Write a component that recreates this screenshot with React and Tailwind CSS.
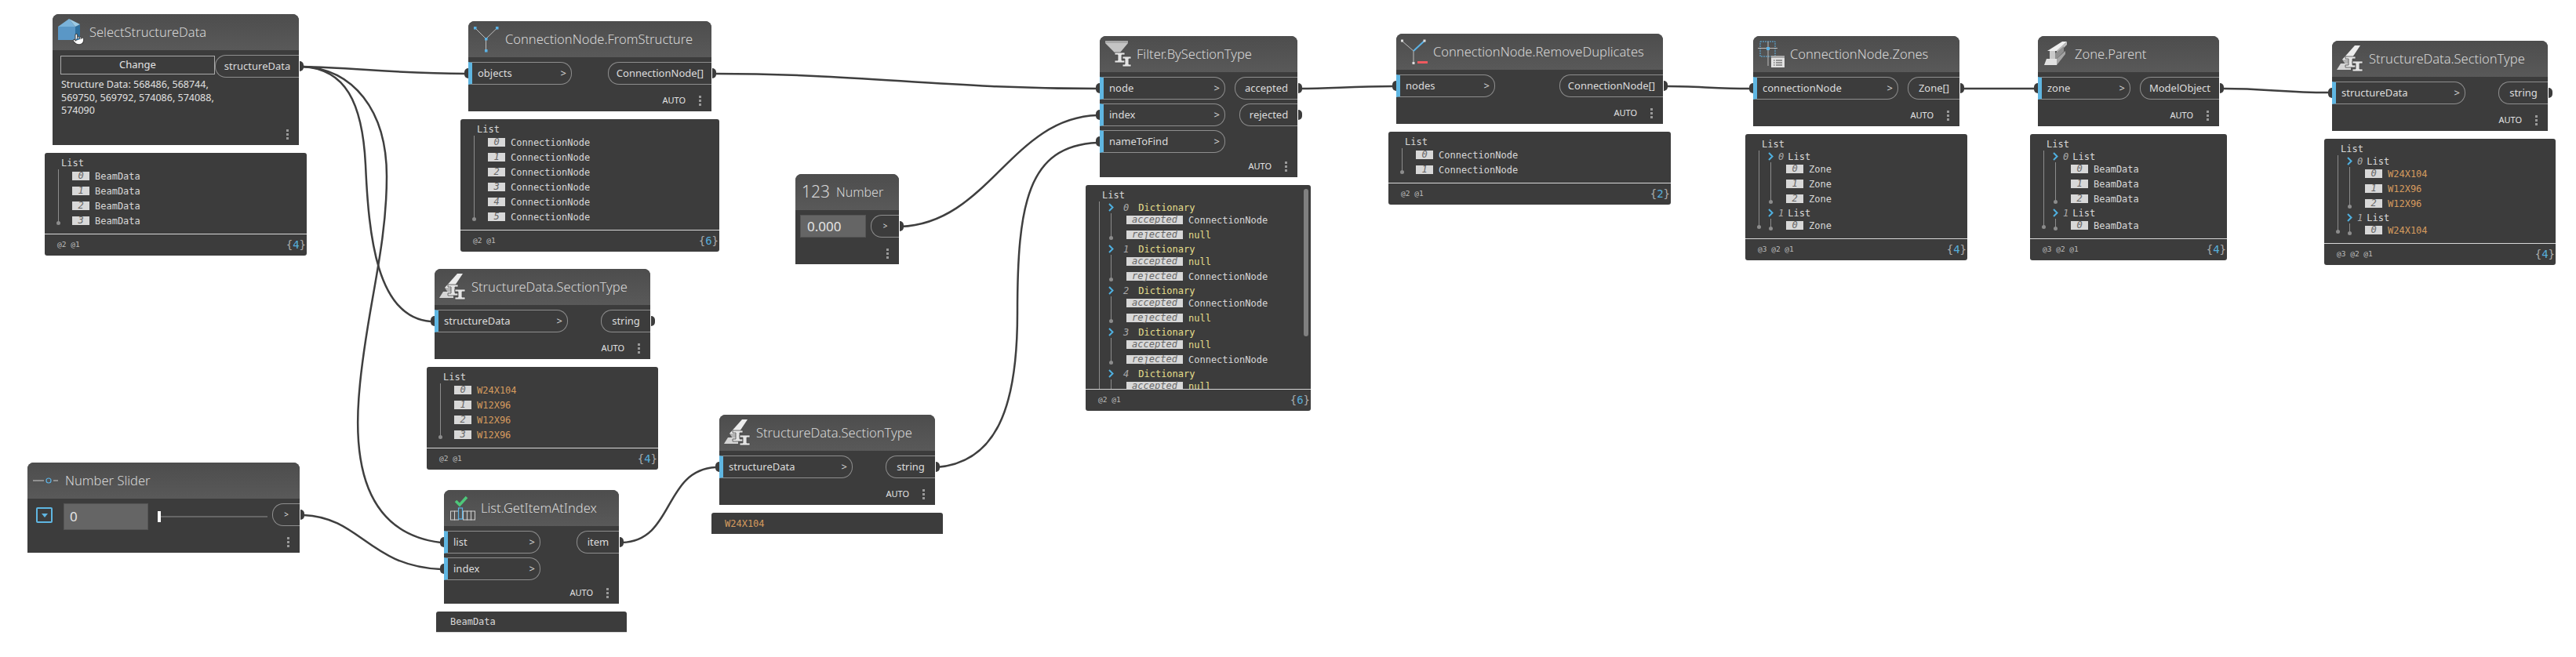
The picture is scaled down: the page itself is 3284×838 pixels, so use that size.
import { Pointer } from "lucide-react";

const sans = "font-['Noto_Sans','Open_Sans',sans-serif]";
const mono = "font-['DejaVu_Sans_Mono','Liberation_Mono',monospace]";

// header icons all use the 47x46 frame left of the title
function IconFrame({ children }) {
  return (
    <svg width="47" height="46" viewBox="0 0 47 46" className="shrink-0">
      {children}
    </svg>
  );
}

function HouseIcon() {
  return (
    <div className="relative shrink-0 w-[47px] h-[46px]">
      <IconFrame>
        <polygon points="7,16 29,16 29,33 7,33" fill="#5a97c6" />
        <polygon points="29,16 35,13 35,33 29,33" fill="#2f709f" />
        <polygon points="7,16 21,6 29,16" fill="#7ab3da" />
        <polygon points="21,6 35,13 29,16" fill="#9ccbe6" />
      </IconFrame>
      <Pointer size={16} strokeWidth={1.6} className="absolute left-[25px] top-[24px] text-[#444] fill-white" />
    </div>
  );
}

function YIcon() {
  return (
    <IconFrame>
      <path d="M9 9L22.5 22.5L36.5 9M22.5 22.5V37" stroke="#bdbdbd" strokeWidth="1" fill="none" />
      <rect x="7" y="7" width="3.5" height="3.5" fill="#5cb3e6" />
      <rect x="35" y="7" width="3.5" height="3.5" fill="#5cb3e6" />
      <rect x="21" y="21" width="3.5" height="3.5" fill="#5cb3e6" />
      <rect x="21" y="36" width="3.5" height="3.5" fill="#5cb3e6" />
    </IconFrame>
  );
}

function RemoveIcon() {
  return (
    <IconFrame>
      <path d="M7 9L22 22V37" stroke="#bdbdbd" strokeWidth="1" fill="none" />
      <path d="M22 22L36 9" stroke="#5cb3e6" strokeWidth="2" fill="none" />
      <rect x="6" y="7.5" width="3" height="3" fill="#ddd" />
      <rect x="34.5" y="7.5" width="3" height="3" fill="#ddd" />
      <rect x="20.5" y="36" width="3" height="3" fill="#ddd" />
      <rect x="27" y="35" width="13" height="3" fill="#ee5a5f" />
    </IconFrame>
  );
}

function SectionIcon() {
  return (
    <IconFrame>
      <polygon points="13,24 29,6 36,6 24,24" fill="#ececec" />
      <polygon points="13,24 24,24 22,30 17,30" fill="#b5b5b5" />
      <polygon points="6,37 11,29 24,29 24,37" fill="#d5d5d5" />
      <path d="M17 20h13v3h-4v8h4v3h-13v-3h4v-8h-4z" fill="#e4e4e4" stroke="#4a4a4a" strokeWidth="0.8" />
      <path d="M26 26h13v3h-4v7h4v3h-13v-3h4v-7h-4z" fill="#e4e4e4" stroke="#4a4a4a" strokeWidth="0.8" />
    </IconFrame>
  );
}

function FilterIcon() {
  return (
    <IconFrame>
      <polygon points="7,6 36,6 36,9 7,9" fill="#a8a8a8" />
      <polygon points="7,9 36,9 26,21 26,24 19,24 19,21" fill="#c4c4c4" />
      <path d="M19 21h13v3h-4v7h4v3h-13v-3h4v-7h-4z" fill="#e4e4e4" stroke="#4a4a4a" strokeWidth="0.8" />
      <path d="M29 26h11v3h-3v7h3v3h-11v-3h3v-7h-3z" fill="#e4e4e4" stroke="#4a4a4a" strokeWidth="0.8" />
    </IconFrame>
  );
}

function ZonesIcon() {
  return (
    <IconFrame>
      <rect x="9" y="7" width="19" height="19" fill="none" stroke="#5cb3e6" strokeWidth="1" strokeDasharray="2 1" />
      <path d="M6 15.5H31M19 7V38" stroke="#bdbdbd" strokeWidth="1" />
      <rect x="17" y="14" width="4" height="4" fill="#5cb3e6" />
      <rect x="23" y="25" width="17" height="15" fill="#e2e2e2" />
      <rect x="23" y="25" width="17" height="3" fill="#a8a8a8" />
      <path d="M26 31h1.5M29 31h8M26 34h1.5M29 34h8M26 37h1.5M29 37h8" stroke="#444" strokeWidth="1" />
    </IconFrame>
  );
}

function BeamIcon() {
  return (
    <IconFrame>
      <polygon points="12,19 31,7 37,7 24,19" fill="#efefef" />
      <polygon points="24,19 37,7 37,11 24,24" fill="#bdbdbd" />
      <polygon points="15,19 22,19 22,29 15,29" fill="#c9c9c9" />
      <polygon points="22,22 33,13 33,20 22,31" fill="#8f8f8f" />
      <polygon points="8,37 11,29 24,29 24,37" fill="#e2e2e2" />
      <polygon points="24,29 35,19 35,23 24,37" fill="#a5a5a5" />
    </IconFrame>
  );
}

function GetItemIcon() {
  return (
    <IconFrame>
      <path d="M15 14L20 19L29 9" stroke="#4ec77a" strokeWidth="3.5" fill="none" />
      <g fill="none" stroke="#d0d0d0" strokeWidth="1">
        <rect x="8.5" y="27" width="5" height="11" />
        <rect x="13.5" y="27" width="5" height="11" />
        <rect x="24.5" y="27" width="5" height="11" />
        <rect x="29.5" y="27" width="5" height="11" />
        <rect x="34.5" y="27" width="5" height="11" />
      </g>
      <rect x="18.5" y="23" width="5" height="14" fill="none" stroke="#5cb3e6" strokeWidth="1.2" />
    </IconFrame>
  );
}

function SliderIcon() {
  return (
    <svg width="42" height="46" viewBox="0 0 42 46" className="shrink-0">
      <path d="M7 23H21M33 23H39" stroke="#d0d0d0" strokeWidth="1" />
      <circle cx="27" cy="23" r="3" fill="none" stroke="#5cb3e6" strokeWidth="1.2" />
    </svg>
  );
}

function Dots() {
  return (
    <div className="flex flex-col gap-[2px]">
      <span className="w-[3px] h-[3px] bg-[#999]" />
      <span className="w-[3px] h-[3px] bg-[#999]" />
      <span className="w-[3px] h-[3px] bg-[#999]" />
    </div>
  );
}

function InPort({ label, width }) {
  return (
    <div className={`relative h-[29px] flex items-center justify-between border-l-[5px] border-l-[#5fb6e2] border-y border-r border-y-[#8e8e8e] border-r-[#8e8e8e] rounded-r-[14px] pl-[7px] pr-[6px] ${width}`}>
      <span className="absolute -left-[10px] top-[7px] w-[5px] h-[13px] bg-[#3c3c3c] rounded-l-full" />
      <span className="text-[13px] text-[#dcdcdc]">{label}</span>
      <span className="text-[13px] text-[#dcdcdc]">&gt;</span>
    </div>
  );
}

function OutPort({ label, width, size = "text-[13px]" }) {
  return (
    <div className={`relative h-[29px] flex items-center justify-center border-y border-l border-[#8e8e8e] rounded-l-[14px] ${width}`}>
      <span className={`${size} text-[#dcdcdc]`}>{label}</span>
      <span className="absolute -right-[6px] top-[7px] w-[5px] h-[13px] bg-[#3c3c3c] rounded-r-full" />
    </div>
  );
}

function Header({ icon, title }) {
  return (
    <div className="flex items-center h-[46px] rounded-t-[8px] bg-linear-to-b from-[#4d4d4d] to-[#595959]">
      {icon}
      <span className="text-[16.5px] font-light text-[#d8d8d8] whitespace-nowrap">{title}</span>
    </div>
  );
}

function Footer({ auto = true }) {
  return (
    <div className="mt-auto h-[28px] flex items-center justify-end gap-[17px] pr-[13px]">
      {auto && <span className="text-[11px] text-[#e4e4e4]">AUTO</span>}
      <Dots />
    </div>
  );
}

function Node({ className, icon, title, inputs, outputs }) {
  return (
    <div className={`absolute flex flex-col bg-[#3c3c3c] rounded-t-[8px] ${sans} ${className}`}>
      <Header icon={icon} title={title} />
      <div className="flex justify-between pt-[6px]">
        <div className="flex flex-col gap-[5px]">
          {inputs.map((p) => (
            <InPort key={p[0]} label={p[0]} width={p[1]} />
          ))}
        </div>
        <div className="flex flex-col items-end gap-[5px]">
          {outputs.map((p) => (
            <OutPort key={p[0]} label={p[0]} width={p[1]} />
          ))}
        </div>
      </div>
      <Footer />
    </div>
  );
}

function Chip({ children, width = "w-[22px]" }) {
  return (
    <span className={`flex justify-center shrink-0 h-[11px] leading-[11px] italic text-[12px] bg-[#d8d8d8] text-[#666] ${width}`}>
      {children}
    </span>
  );
}

function Leaf({ i, text, color = "text-[#d8d8d8]", width }) {
  return (
    <div className="flex items-center gap-[7px] h-[19px] whitespace-nowrap">
      <Chip width={width}>{i}</Chip>
      <span className={color}>{text}</span>
    </div>
  );
}

function Rail({ className }) {
  return (
    <div className={`absolute w-px bg-[#8c8c8c] ${className}`}>
      <span className="absolute -left-[2px] -bottom-[2px] w-[5px] h-[5px] rounded-full bg-[#8c8c8c]" />
    </div>
  );
}

function Chevron() {
  return (
    <svg width="7" height="11" viewBox="0 0 7 11" className="shrink-0 ml-[12px]">
      <path d="M1 1L5.5 5.5L1 10" fill="none" stroke="#4fb0e0" strokeWidth="2" />
    </svg>
  );
}

function Group({ i, label, labelColor = "text-[#d8d8d8]", idxClass, labelClass, children }) {
  return (
    <div className="relative pt-[2px]">
      <div className="flex items-center h-[13px] whitespace-nowrap">
        <Chevron />
        <span className={`italic text-[#aaa] ${idxClass}`}>{i}</span>
        <span className={`${labelColor} ${labelClass}`}>{label}</span>
      </div>
      <Rail className="left-[15px] top-[16px] bottom-[5px]" />
      <div className="pl-[35px]">{children}</div>
    </div>
  );
}

function Watch({ className, levels = "@2 @1", count, children }) {
  return (
    <div className={`absolute flex flex-col bg-[#3c3c3c] rounded-[3px] text-[12px] text-[#d8d8d8] ${mono} ${className}`}>
      <div className="relative flex-1 min-h-0 overflow-hidden pt-[7px] pl-[17px]">
        <div className="h-[13px] leading-[13px] pl-[4px]">List</div>
        <div className="relative">
          {children}
        </div>
      </div>
      <div className="h-px bg-[#d8d8d8]" />
      <div className="h-[27px] flex items-center justify-between pl-[16px] pr-px">
        <span className="text-[9.5px] text-[#bbb]">{levels}</span>
        <span className="text-[14px] text-[#aaa]">
          {"{"}<span className="text-[#56addb]">{count}</span>{"}"}
        </span>
      </div>
    </div>
  );
}

function FlatList({ rows, color }) {
  return (
    <div className="relative pl-[18px]">
      <Rail className="left-0 top-[1px] bottom-[6px]" />
      {rows.map((t, i) => (
        <Leaf key={i} i={i} text={t} color={color} />
      ))}
    </div>
  );
}

function NestedList({ first, second, color }) {
  return (
    <div className="relative">
      <Rail className="left-0 top-[1px] bottom-[7px]" />
      <Group i={0} label="List" idxClass="ml-[6px]" labelClass="ml-[5px]">
        {first.map((t, i) => (
          <Leaf key={i} i={i} text={t} color={color} />
        ))}
      </Group>
      <Group i={1} label="List" idxClass="ml-[6px]" labelClass="ml-[5px]">
        <Leaf i={0} text={second} color={color} />
      </Group>
    </div>
  );
}

const yellow = "text-[#e5df8c]";
const orange = "text-[#d69b5e]";

function DictRows() {
  const rows = [
    ["ConnectionNode", "null"],
    ["null", "ConnectionNode"],
    ["ConnectionNode", "null"],
    ["null", "ConnectionNode"],
    ["null", "ConnectionNode"],
  ];
  return (
    <div className="relative">
      <Rail className="left-0 top-[1px] bottom-0" />
      {rows.map((r, i) => (
        <Group key={i} i={i} label="Dictionary" labelColor={yellow} idxClass="ml-[12px]" labelClass="ml-[12px]">
          <Leaf i="accepted" text={r[0]} width="w-[72px]" color={r[0] === "null" ? yellow : undefined} />
          <Leaf i="rejected" text={r[1]} width="w-[72px]" color={r[1] === "null" ? yellow : undefined} />
        </Group>
      ))}
    </div>
  );
}

function Wires() {
  const paths = [
    "M386 85C450 86 500 94 594 94",
    "M386 85C440 88 462 130 466 210C470 300 480 405 549 410",
    "M386 85C450 88 493 140 493 225C493 320 466 400 458 500C450 590 465 680 562 692",
    "M387 657C460 660 470 722 562 726",
    "M793 692C860 690 845 600 912 596",
    "M912 94C1100 94 1200 113 1399 113",
    "M1148 289C1260 285 1290 150 1399 147",
    "M1194 596C1270 590 1297 520 1297 400C1297 260 1310 186 1399 182",
    "M1656 113C1700 113 1720 110 1777 110",
    "M2125 110C2160 110 2190 113 2230 113",
    "M2503 113H2594",
    "M2835 113C2890 113 2910 118 2968 118",
  ];
  return (
    <svg width="3284" height="838" viewBox="0 0 3284 838" className="absolute left-0 top-0">
      {paths.map((d) => (
        <path key={d} d={d} fill="none" stroke="#3f3f3f" strokeWidth="2.5" />
      ))}
    </svg>
  );
}

export default function App() {
  return (
    <div className="relative w-[3284px] h-[838px] bg-white overflow-hidden">
      <Wires />

      {/* SelectStructureData */}
      <div className={`absolute left-[67px] top-[18px] w-[314px] h-[167px] flex flex-col bg-[#3c3c3c] rounded-t-[8px] ${sans}`}>
        <Header icon={<HouseIcon />} title="SelectStructureData" />
        <div className="flex justify-between pt-[6px]">
          <div className="pl-[10px] pt-px w-[207px]">
            <div className="h-[24px] flex items-center justify-center border border-[#aaa] text-[13px] text-[#e4e4e4]">Change</div>
            <p className="mt-[5px] pl-px text-[12.5px] leading-[16.5px] text-[#e0e0e0] whitespace-nowrap">
              Structure Data: 568486, 568744,<br />
              569750, 569792, 574086, 574088,<br />
              574090
            </p>
          </div>
          <OutPort label="structureData" width="w-[107px]" />
        </div>
        <Footer auto={false} />
      </div>
      <Watch className="left-[57px] top-[195px] w-[334px] h-[131px]" count={4}>
        <FlatList rows={["BeamData", "BeamData", "BeamData", "BeamData"]} />
      </Watch>

      <Node
        className="left-[597px] top-[27px] w-[310px] h-[115px]"
        icon={<YIcon />}
        title="ConnectionNode.FromStructure"
        inputs={[["objects", "w-[132px]"]]}
        outputs={[["ConnectionNode[]", "w-[132px]"]]}
      />
      <Watch className="left-[587px] top-[152px] w-[330px] h-[169px]" count={6}>
        <FlatList rows={["ConnectionNode", "ConnectionNode", "ConnectionNode", "ConnectionNode", "ConnectionNode", "ConnectionNode"]} />
      </Watch>

      <Node
        className="left-[554px] top-[343px] w-[275px] h-[115px]"
        icon={<SectionIcon />}
        title="StructureData.SectionType"
        inputs={[["structureData", "w-[170px]"]]}
        outputs={[["string", "w-[63px]"]]}
      />
      <Watch className="left-[544px] top-[468px] w-[295px] h-[131px]" count={4}>
        <FlatList rows={["W24X104", "W12X96", "W12X96", "W12X96"]} color={orange} />
      </Watch>

      {/* Number Slider */}
      <div className={`absolute left-[35px] top-[590px] w-[347px] h-[115px] flex flex-col bg-[#3c3c3c] rounded-t-[8px] ${sans}`}>
        <div className="flex items-center h-[46px] rounded-t-[8px] bg-linear-to-b from-[#4d4d4d] to-[#595959]">
          <SliderIcon />
          <span className="ml-[6px] text-[16.5px] font-light text-[#d8d8d8]">Number Slider</span>
        </div>
        <div className="flex items-start pt-[6px]">
          <div className="ml-[11px] mt-[5px] w-[21px] h-[20px] flex items-center justify-center border-2 border-[#5fb6e2] rounded-[2px]">
            <span className="w-0 h-0 border-x-[4px] border-x-transparent border-t-[5px] border-t-[#5fb6e2]" />
          </div>
          <div className="ml-[14px] w-[108px] h-[34px] flex items-center pl-[7px] bg-[#656565] border border-[#555] text-[17px] text-[#e4e4e4]">0</div>
          <div className="ml-[12px] mt-[10px] w-[140px] h-[14px] relative flex items-center">
            <span className="w-[4px] h-[14px] bg-white" />
            <span className="flex-1 h-[2px] bg-[#666]" />
          </div>
          <div className="ml-[6px]">
            <OutPort label=">" width="w-[35px]" size="text-[10px]" />
          </div>
        </div>
        <Footer auto={false} />
      </div>

      <Node
        className="left-[566px] top-[625px] w-[223px] h-[145px]"
        icon={<GetItemIcon />}
        title="List.GetItemAtIndex"
        inputs={[["list", "w-[123px]"], ["index", "w-[123px]"]]}
        outputs={[["item", "w-[54px]"]]}
      />
      <div className={`absolute left-[556px] top-[780px] w-[243px] h-[27px] flex items-center pl-[18px] bg-[#3c3c3c] rounded-t-[3px] border-b border-[#d8d8d8] text-[12px] text-[#d8d8d8] ${mono}`}>BeamData</div>

      <Node
        className="left-[917px] top-[529px] w-[275px] h-[115px]"
        icon={<SectionIcon />}
        title="StructureData.SectionType"
        inputs={[["structureData", "w-[170px]"]]}
        outputs={[["string", "w-[63px]"]]}
      />
      <div className={`absolute left-[907px] top-[654px] w-[295px] h-[27px] flex items-center pl-[17px] bg-[#3c3c3c] rounded-t-[3px] text-[12px] ${orange} ${mono}`}>W24X104</div>

      {/* Number */}
      <div className={`absolute left-[1014px] top-[222px] w-[132px] h-[115px] flex flex-col bg-[#3c3c3c] rounded-t-[8px] ${sans}`}>
        <div className="flex items-center h-[46px] pl-[8px] rounded-t-[8px] bg-linear-to-b from-[#4d4d4d] to-[#595959] text-[#d8d8d8]">
          <span className="text-[21px] font-light">123</span>
          <span className="ml-[8px] text-[16px] font-light">Number</span>
        </div>
        <div className="flex pt-[6px] pl-[6px] gap-[6px]">
          <div className="w-[84px] h-[29px] flex items-center pl-[8px] bg-[#656565] border border-[#555] text-[17px] text-[#e4e4e4]">0.000</div>
          <OutPort label=">" width="w-[36px]" size="text-[10px]" />
        </div>
        <Footer auto={false} />
      </div>

      <Node
        className="left-[1402px] top-[46px] w-[252px] h-[180px]"
        icon={<FilterIcon />}
        title="Filter.BySectionType"
        inputs={[["node", "w-[160px]"], ["index", "w-[160px]"], ["nameToFind", "w-[160px]"]]}
        outputs={[["accepted", "w-[80px]"], ["rejected", "w-[74px]"]]}
      />
      <Watch className="left-[1384px] top-[236px] w-[287px] h-[288px]" count={6}>
        <DictRows />
      </Watch>
      <div className="absolute left-[1662px] top-[241px] w-[6px] h-[188px] rounded-[3px] bg-[#808080]" />

      <Node
        className="left-[1780px] top-[43px] w-[340px] h-[115px]"
        icon={<RemoveIcon />}
        title="ConnectionNode.RemoveDuplicates"
        inputs={[["nodes", "w-[126px]"]]}
        outputs={[["ConnectionNode[]", "w-[132px]"]]}
      />
      <Watch className="left-[1770px] top-[168px] w-[360px] h-[93px]" count={2}>
        <FlatList rows={["ConnectionNode", "ConnectionNode"]} />
      </Watch>

      <Node
        className="left-[2235px] top-[46px] w-[263px] h-[115px]"
        icon={<ZonesIcon />}
        title="ConnectionNode.Zones"
        inputs={[["connectionNode", "w-[185px]"]]}
        outputs={[["Zone[]", "w-[66px]"]]}
      />
      <Watch className="left-[2225px] top-[171px] w-[283px] h-[161px]" levels="@3 @2 @1" count={4}>
        <NestedList first={["Zone", "Zone", "Zone"]} second="Zone" />
      </Watch>

      <Node
        className="left-[2598px] top-[46px] w-[231px] h-[115px]"
        icon={<BeamIcon />}
        title="Zone.Parent"
        inputs={[["zone", "w-[118px]"]]}
        outputs={[["ModelObject", "w-[101px]"]]}
      />
      <Watch className="left-[2588px] top-[171px] w-[251px] h-[161px]" levels="@3 @2 @1" count={4}>
        <NestedList first={["BeamData", "BeamData", "BeamData"]} second="BeamData" />
      </Watch>

      <Node
        className="left-[2973px] top-[52px] w-[275px] h-[115px]"
        icon={<SectionIcon />}
        title="StructureData.SectionType"
        inputs={[["structureData", "w-[170px]"]]}
        outputs={[["string", "w-[63px]"]]}
      />
      <Watch className="left-[2963px] top-[177px] w-[295px] h-[161px]" levels="@3 @2 @1" count={4}>
        <NestedList first={["W24X104", "W12X96", "W12X96"]} second="W24X104" color={orange} />
      </Watch>
    </div>
  );
}
